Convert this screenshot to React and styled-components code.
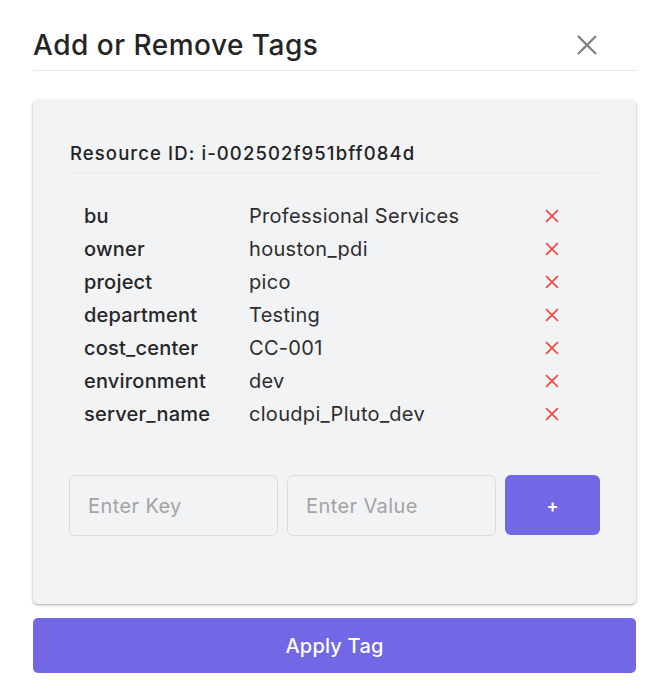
import React from "react";
import styled, { createGlobalStyle } from "styled-components";

const Global = createGlobalStyle`
  html, body { margin: 0; padding: 0; background: #ffffff; }
  body { font-family: Inter, "Noto Sans", "Liberation Sans", sans-serif; color: #262626; }
  * { box-sizing: border-box; }
`;

const Modal = styled.div`
  width: 671px;
  padding: 22px 35px 20px 33px;
`;

const Header = styled.div`
  display: flex;
  align-items: center;
  justify-content: space-between;
  height: 49px;
  border-bottom: 1px solid #e8e8e8;
  padding-bottom: 3px;
`;

const Title = styled.h2`
  margin: 0;
  font-size: 28px;
  font-weight: 500;
  letter-spacing: 0.5px;
  color: #242424;
`;

const CloseBtn = styled.button`
  border: none;
  background: none;
  padding: 0;
  margin-right: 38px;
  width: 22px;
  height: 22px;
  display: flex;
  cursor: pointer;
`;

const Card = styled.div`
  margin-top: 29px;
  background: #f2f3f5;
  border-radius: 5px;
  box-shadow: 0 1px 3px rgba(0, 0, 0, 0.35);
  padding: 42px 36px 68px 36px;
`;

const ResourceId = styled.div`
  font-size: 18.5px;
  font-weight: 500;
  letter-spacing: 1.1px;
  color: #232323;
  padding: 0 0 8px 1px;
  border-bottom: 1px solid #e9e9ec;
`;

const TagList = styled.div`
  margin-top: 26px;
  display: flex;
  flex-direction: column;
  padding-left: 15px;
`;

const TagRow = styled.div`
  display: grid;
  grid-template-columns: 165px 296px 20px;
  align-items: center;
  height: 33px;
`;

const Key = styled.span`
  font-size: 20px;
  font-weight: 500;
  letter-spacing: 0.2px;
  color: #262626;
`;

const Value = styled.span`
  font-size: 20px;
  font-weight: 400;
  letter-spacing: 0.3px;
  color: #2e2e2e;
`;

const RemoveBtn = styled.button`
  border: none;
  background: none;
  padding: 0;
  width: 14px;
  height: 14px;
  display: flex;
  cursor: pointer;
`;

const AddRow = styled.div`
  margin-top: 45px;
  display: flex;
  gap: 9px;
  align-items: flex-start;
`;

const Input = styled.input`
  width: 209px;
  height: 61px;
  border: 1px solid #dcdcdf;
  border-radius: 6px;
  background: #f2f3f5;
  padding: 0 18px;
  font-family: inherit;
  font-size: 20px;
  letter-spacing: 0.4px;
  color: #333;
  outline: none;
  &::placeholder { color: #a3a3a6; }
`;

const PlusBtn = styled.button`
  width: 95px;
  height: 60px;
  border: none;
  border-radius: 6px;
  background: #7267e5;
  color: #fff;
  font-family: inherit;
  font-size: 18px;
  font-weight: 600;
  cursor: pointer;
`;

const ApplyBtn = styled.button`
  display: block;
  width: 603px;
  height: 55px;
  margin-top: 14px;
  border: none;
  border-radius: 5px;
  background: #7267e5;
  color: #fff;
  font-family: inherit;
  font-size: 20px;
  font-weight: 500;
  letter-spacing: 0.2px;
  cursor: pointer;
`;

const tags = [
  ["bu", "Professional Services"],
  ["owner", "houston_pdi"],
  ["project", "pico"],
  ["department", "Testing"],
  ["cost_center", "CC-001"],
  ["environment", "dev"],
  ["server_name", "cloudpi_Pluto_dev"],
];

const XIcon = ({ size, color, width }) => (
  <svg width={size} height={size} viewBox="0 0 24 24" fill="none">
    <path d="M3 3L21 21M21 3L3 21" stroke={color} strokeWidth={width} strokeLinecap="square" />
  </svg>
);

export default function App() {
  return (
    <>
      <Global />
      <Modal>
        <Header>
          <Title>Add or Remove Tags</Title>
          <CloseBtn aria-label="Close">
            <XIcon size={22} color="#7d7d7d" width={2.4} />
          </CloseBtn>
        </Header>
        <Card>
          <ResourceId>Resource ID: i-002502f951bff084d</ResourceId>
          <TagList>
            {tags.map(([k, v]) => (
              <TagRow key={k}>
                <Key>{k}</Key>
                <Value>{v}</Value>
                <RemoveBtn aria-label={`Remove ${k}`}>
                  <XIcon size={14} color="#f0443a" width={3} />
                </RemoveBtn>
              </TagRow>
            ))}
          </TagList>
          <AddRow>
            <Input placeholder="Enter Key" />
            <Input placeholder="Enter Value" />
            <PlusBtn>+</PlusBtn>
          </AddRow>
        </Card>
        <ApplyBtn>Apply Tag</ApplyBtn>
      </Modal>
    </>
  );
}
